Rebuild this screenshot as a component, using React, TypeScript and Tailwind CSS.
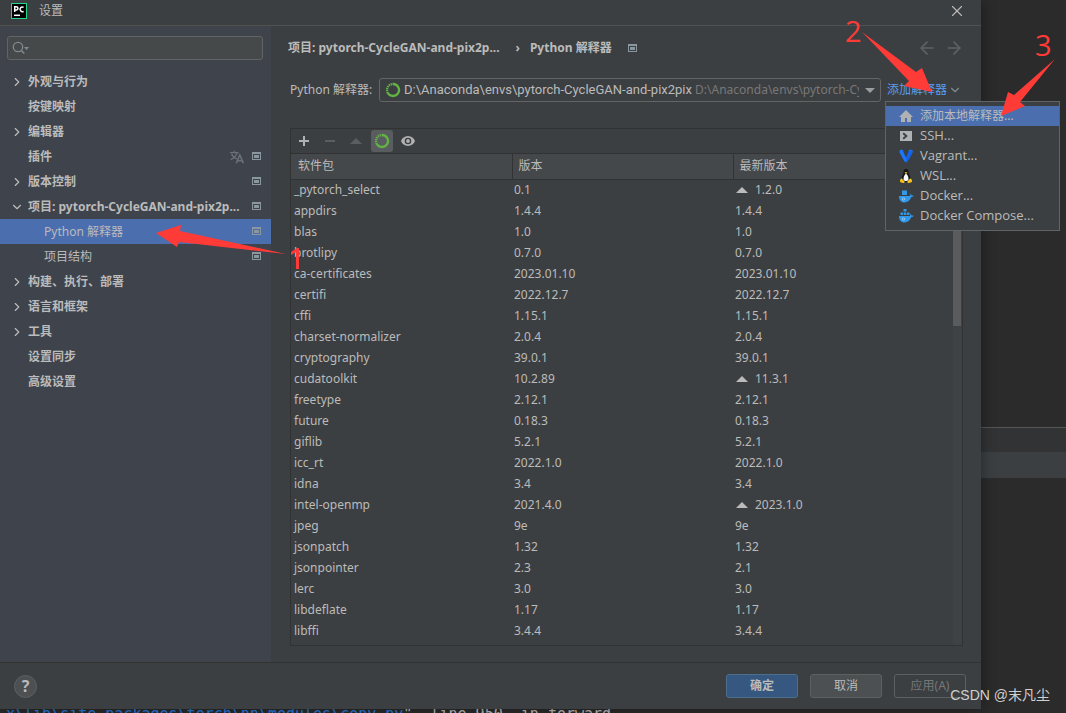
import React from 'react'
import clsx from 'clsx'
import { ArrowLeft, ArrowRight, ChevronDown, ChevronRight, X } from 'lucide-react'

const NAV = [
  { label: '外观与行为', arrow: 'right' },
  { label: '按键映射' },
  { label: '编辑器', arrow: 'right' },
  { label: '插件', translate: true, project: true },
  { label: '版本控制', arrow: 'right', project: true },
  { label: '项目: pytorch-CycleGAN-and-pix2p...', arrow: 'down', project: true },
  { label: 'Python 解释器', child: true, active: true, project: true },
  { label: '项目结构', child: true, project: true },
  { label: '构建、执行、部署', arrow: 'right' },
  { label: '语言和框架', arrow: 'right' },
  { label: '工具', arrow: 'right' },
  { label: '设置同步' },
  { label: '高级设置' },
]

const PACKAGES = [
  { name: '_pytorch_select', version: '0.1', latest: '1.2.0', upgrade: true },
  { name: 'appdirs', version: '1.4.4', latest: '1.4.4' },
  { name: 'blas', version: '1.0', latest: '1.0' },
  { name: 'brotlipy', version: '0.7.0', latest: '0.7.0' },
  { name: 'ca-certificates', version: '2023.01.10', latest: '2023.01.10' },
  { name: 'certifi', version: '2022.12.7', latest: '2022.12.7' },
  { name: 'cffi', version: '1.15.1', latest: '1.15.1' },
  { name: 'charset-normalizer', version: '2.0.4', latest: '2.0.4' },
  { name: 'cryptography', version: '39.0.1', latest: '39.0.1' },
  { name: 'cudatoolkit', version: '10.2.89', latest: '11.3.1', upgrade: true },
  { name: 'freetype', version: '2.12.1', latest: '2.12.1' },
  { name: 'future', version: '0.18.3', latest: '0.18.3' },
  { name: 'giflib', version: '5.2.1', latest: '5.2.1' },
  { name: 'icc_rt', version: '2022.1.0', latest: '2022.1.0' },
  { name: 'idna', version: '3.4', latest: '3.4' },
  { name: 'intel-openmp', version: '2021.4.0', latest: '2023.1.0', upgrade: true },
  { name: 'jpeg', version: '9e', latest: '9e' },
  { name: 'jsonpatch', version: '1.32', latest: '1.32' },
  { name: 'jsonpointer', version: '2.3', latest: '2.1' },
  { name: 'lerc', version: '3.0', latest: '3.0' },
  { name: 'libdeflate', version: '1.17', latest: '1.17' },
  { name: 'libffi', version: '3.4.4', latest: '3.4.4' },
]

const PyCharmLogo = () => (
  <svg className="size-4" viewBox="0 0 16 16">
    <rect x="0.5" y="0.5" width="15" height="15" fill="#000" stroke="#21d789" />
    <g fill="none" stroke="#fff" strokeWidth="1.5">
      <path d="M3.7 9V3.7h1.6a1.6 1.6 0 0 1 0 3.3H3.7" />
      <path d="M12.6 4.4a2.3 2.3 0 1 0 0 3.9" />
      <path d="M3 12.3h6" />
    </g>
  </svg>
)

const ProjectIcon = () => (
  <svg className="size-[9px] shrink-0" viewBox="0 0 9 9" shapeRendering="crispEdges">
    <path d="M0 0h9v8H0zM1 2v5h7V2z" fill="#8b979f" fillRule="evenodd" />
    <path d="M2 3h5v3H2z" fill="#8b979f" />
  </svg>
)

const TranslateIcon = () => (
  <svg className="size-3.5" viewBox="0 0 14 14" fill="none" stroke="#6b7079" strokeWidth="1.3">
    <path d="M0 2.6h8.5M4.3 0.8v1.8M1.6 4c.8 2.4 3 4 5.2 4.8M7 2.8C6.2 6 3.8 8.3 0.6 9.6" />
    <path d="M6.3 13.2L9.8 5l3.6 8.2M7.6 10.8h4.6" strokeWidth="1.6" />
  </svg>
)

const CondaIcon = () => (
  <svg className="size-4 shrink-0" viewBox="0 0 16 16" fill="none" stroke="#62b543">
    <path d="M8 2a6 6 0 1 1-5.2 9" strokeWidth="2.3" />
    <path d="M2.8 11A6 6 0 0 1 8 2" strokeWidth="2.3" strokeDasharray="1.3 0.7" />
  </svg>
)

const Triangle = ({ className }: { className: string }) => (
  <svg className={className} viewBox="0 0 12 6">
    <path d="M0 6L6 0l6 6z" fill="currentColor" />
  </svg>
)

const HomeIcon = () => (
  <svg className="size-4" viewBox="0 0 16 16" fill="#afb1b3">
    <path d="M8 2L1 9h2v5h4v-4h2v4h4V9h2z" />
  </svg>
)

const SshIcon = () => (
  <svg className="size-4" viewBox="0 0 16 16">
    <path d="M2 3h12v10H2z" fill="#afb1b3" />
    <path d="M5.2 5.2L8.4 8l-3.2 2.8" fill="none" stroke="#3c3f41" strokeWidth="1.8" />
  </svg>
)

const VagrantIcon = () => (
  <svg className="size-4" viewBox="0 0 16 16">
    <path d="M1.5 2.5l2.2-1 1.6 1v1.2L8 10l2.7-6.3V2.5l1.6-1 2.2 1v1.8L9.8 13 8 14.5 6.2 13 1.5 4.3z" fill="#1a78ff" />
    <path d="M10.7 3.5l3.8-1v1.8L9.8 13 8 14.5V10z" fill="#1263ea" />
  </svg>
)

const LinuxIcon = () => (
  <svg className="size-4" viewBox="0 0 16 16">
    <path d="M8 1c-2 0-2.6 1.4-2.5 3.4C5.5 6.3 3.5 8 3.3 11L5 14h6l1.8-3c-.2-3-2.3-4.7-2.3-6.6C10.6 2.4 10 1 8 1z" fill="#16181a" />
    <path d="M8 5.5C6.4 6.8 5.4 9 5.5 11.5c.8 2 4.2 2 5 0C10.6 9 9.6 6.8 8 5.5z" fill="#fff" />
    <path d="M6.5 4.6L8 4l1.5.6L8 6z" fill="#f5b91f" />
    <path d="M3.7 10.2l2.9 3.2c0 1.5-1.2 1.7-2.3 1.3L2 14.1c.2-1-.1-1.7.2-2.3zM12.3 10.2l-2.9 3.2c0 1.5 1.2 1.7 2.3 1.3l2.3-.6c-.2-1 .1-1.7-.2-2.3z" fill="#f8c21c" />
  </svg>
)

const DockerIcon = ({ compose }: { compose?: boolean }) => (
  <svg className="size-4" viewBox="0 0 16 16">
    <path d="M1 8h10.8c.6-.4.8-1.1.4-2.2 1 .4 1.3 1 1.4 1.7.8-.2 1.6 0 2.1.3-.5 1-1.4 1.3-2.4 1.3C12.2 12.7 9.7 14.5 6.5 14.5 3 14.5 1 12.3 1 8z" fill="#3298e8" />
    <circle cx="5.5" cy="11" r="1.2" fill="none" stroke="#9fd1f8" strokeWidth="0.8" />
    {compose ? (
      <path d="M5.5 1h3v2.5h-3zM2.5 4.5h2.5V7H2.5zM5.7 4.5h2.6V7H5.7zM9 4.5h2.5V7H9z" fill="#3298e8" />
    ) : (
      <path d="M4 2.5h5V7H4z" fill="#3298e8" />
    )}
  </svg>
)

const MENU = [
  { label: '添加本地解释器...', icon: <HomeIcon />, active: true },
  { label: 'SSH...', icon: <SshIcon /> },
  { label: 'Vagrant...', icon: <VagrantIcon /> },
  { label: 'WSL...', icon: <LinuxIcon /> },
  { label: 'Docker...', icon: <DockerIcon /> },
  { label: 'Docker Compose...', icon: <DockerIcon compose /> },
]

const Sidebar = () => (
  <nav className="w-[271px] shrink-0 bg-[#3e434c]">
    <div className="relative mt-2.5 mr-2 pl-[7px]">
      <input
        aria-label="搜索设置"
        className="block h-6 w-full rounded-[3px] border border-[#646464] bg-[#45494a] pl-7 outline-none"
      />
      <svg className="absolute top-1 left-3 h-4 w-5" viewBox="0 0 20 16" fill="none" stroke="#7f8b91">
        <circle cx="6" cy="7" r="4.7" strokeWidth="1.3" />
        <path d="M9.3 10.5l3 3" strokeWidth="1.6" />
        <path d="M12 7h5l-2.5 3z" fill="#7f8b91" stroke="none" />
      </svg>
    </div>
    <ul className="mt-[9px]">
      {NAV.map((item) => (
        <li key={item.label}>
          <a
            href="#"
            className={clsx(
              'flex h-[25px] items-center pr-2.5 whitespace-nowrap',
              item.child ? 'pl-11' : 'pl-2.5 font-bold',
              item.active && 'bg-[#4b6eaf]'
            )}
          >
            {!item.child && (
              <span className="w-[18px] shrink-0">
                {item.arrow === 'right' && <ChevronRight className="size-3.5" />}
                {item.arrow === 'down' && <ChevronDown className="size-3.5" />}
              </span>
            )}
            <span className="flex-1">{item.label}</span>
            <span className="flex items-center gap-2">
              {item.translate && <TranslateIcon />}
              {item.project && <ProjectIcon />}
            </span>
          </a>
        </li>
      ))}
    </ul>
  </nav>
)

const InterpreterMenu = () => (
  <div className="absolute top-full left-0 z-10 -mt-px w-[175px] border border-[#616365] bg-[#3c3f41] py-1">
    {MENU.map((item) => (
      <button
        key={item.label}
        className={clsx(
          'flex h-5 w-full items-center gap-1.5 pl-3 whitespace-nowrap',
          item.active ? 'bg-[#4b6eaf]' : "font-['Open_Sans',sans-serif] text-[13px]"
        )}
      >
        {item.icon}
        {item.label}
      </button>
    ))}
  </div>
)

const Toolbar = () => (
  <div className="flex h-6 items-center gap-1 px-0.5">
    <button aria-label="安装" className="grid size-[22px] place-items-center">
      <svg className="size-2.5" viewBox="0 0 10 10"><path d="M5 0v10M0 5h10" stroke="#afb1b3" strokeWidth="2" /></svg>
    </button>
    <button aria-label="卸载" className="grid size-[22px] place-items-center">
      <svg className="size-2.5" viewBox="0 0 10 10"><path d="M0 5h10" stroke="#5b5e60" strokeWidth="2" /></svg>
    </button>
    <button aria-label="升级" className="grid size-[22px] place-items-center">
      <Triangle className="h-1.5 w-3 text-[#5b5e60]" />
    </button>
    <button aria-label="使用 Conda 软件包管理器" className="grid size-[22px] place-items-center rounded-[3px] bg-[#595d5f]">
      <CondaIcon />
    </button>
    <button aria-label="显示早期发行版" className="grid size-[22px] place-items-center">
      <svg className="size-4" viewBox="0 0 16 16">
        <path d="M8 3C4.5 3 2 5.2 1 8c1 2.8 3.5 5 7 5s6-2.2 7-5c-1-2.8-3.5-5-7-5zm0 1.7a3.3 3.3 0 1 1 0 6.6 3.3 3.3 0 0 1 0-6.6z" fill="#afb1b3" fillRule="evenodd" />
        <circle cx="8" cy="8" r="1.9" fill="#afb1b3" />
      </svg>
    </button>
  </div>
)

const PackageTable = () => (
  <div className="flex flex-1 flex-col border border-[#323232]">
    <Toolbar />
    <div className="relative flex-1 border-t border-[#323232]">
      <table className="w-full table-fixed border-collapse text-left">
        <thead>
          <tr className="h-[25px] border-b border-[#323232] bg-[#45484a]">
            <th className="w-[221px] border-r border-[#323232] pl-[7px] font-normal">软件包</th>
            <th className="w-[221px] border-r border-[#323232] pl-1.5 font-normal">版本</th>
            <th className="pl-1.5 font-normal">最新版本</th>
          </tr>
        </thead>
        <tbody>
          {PACKAGES.map((pkg) => (
            <tr key={pkg.name} className="h-[21px] leading-4">
              <td className="pl-[3px]">{pkg.name}</td>
              <td className="pl-0.5">{pkg.version}</td>
              <td className="pl-0.5">
                <span className="flex items-center gap-1.5">
                  {pkg.upgrade && <Triangle className="mx-px h-1.5 w-3" />}
                  {pkg.latest}
                </span>
              </td>
            </tr>
          ))}
        </tbody>
      </table>
      <div className="absolute top-[26px] right-0 bottom-0 w-[9px] bg-[#3f4244]">
        <div className="h-[146px] w-2 bg-[#595b5d]" />
      </div>
    </div>
  </div>
)

const InterpreterPage = () => (
  <main className="flex min-w-0 flex-1 flex-col pr-[18px] pb-4 pl-[19px]">
    <div className="-ml-0.5 flex h-11 items-center">
      <h1 className="flex items-center font-bold whitespace-nowrap">
        <span>项目: pytorch-CycleGAN-and-pix2p...</span>
        <span className="mr-2.5 ml-4">›</span>
        <span>Python 解释器</span>
      </h1>
      <span className="ml-4 flex-1"><ProjectIcon /></span>
      <div className="-mr-px flex gap-[7px] text-[#5f6264]">
        <button aria-label="后退"><ArrowLeft className="size-5" /></button>
        <button aria-label="前进"><ArrowRight className="size-5" /></button>
      </div>
    </div>
    <div className="mt-2 flex h-6 items-center">
      <label htmlFor="interpreter" className="w-[89px] shrink-0 whitespace-nowrap">Python 解释器:</label>
      <button
        id="interpreter"
        className="flex h-6 min-w-0 flex-1 items-center rounded-[3px] border border-[#646464] px-[5px]"
      >
        <CondaIcon />
        <span className="ml-[3px] min-w-0 flex-1 overflow-hidden text-left whitespace-nowrap">
          <span className="font-['Roboto',sans-serif] text-[13px]">D:\Anaconda\envs\pytorch-CycleGAN-and-pix2pix</span>{' '}
          <span className="text-[#787878]">D:\Anaconda\envs\pytorch-CycleGAN-and-pix2pix</span>
        </span>
        <Triangle className="ml-1.5 h-[5px] w-2.5 shrink-0 rotate-180 text-[#9a9da0]" />
      </button>
      <div className="relative ml-1 flex h-6 w-[78px] items-center">
        <button className="flex items-center pl-0.5 whitespace-nowrap text-[#589df6]">
          添加解释器
          <ChevronDown className="ml-px size-3.5 text-[#7f8b91]" />
        </button>
        <InterpreterMenu />
      </div>
    </div>
    <div className="mt-[26px] flex flex-1 flex-col">
      <PackageTable />
    </div>
  </main>
)

const Footer = () => (
  <footer className="flex h-[47px] items-center gap-3 border-t border-[#323232] pr-[15px] pl-3.5">
    <button className="mr-auto grid size-[23px] place-items-center rounded-full border border-[#5e6060] bg-[#4c5052] text-base leading-none font-bold">
      ?
    </button>
    <button className="h-6 w-18 rounded-[3px] border border-[#4c708c] bg-[#365880] font-bold">确定</button>
    <button className="h-6 w-18 rounded-[3px] border border-[#5e6060] bg-[#4c5052]">取消</button>
    <button disabled className="h-6 w-18 rounded-[3px] border border-[#5e6060] text-[#777]">应用(A)</button>
  </footer>
)

// red step markers over the window
const Annotations = () => (
  <svg className="pointer-events-none absolute top-0 left-0 z-20 h-[713px] w-[1066px]" viewBox="0 0 1066 713" fill="#ff3b38">
    <path d="M156 233L181 225 180 231 286 254 179 242 177 247z" />
    <path d="M862 32L916 72 922 68 932 92 904 86 909 81z" />
    <path d="M1055 59L1020 102 1025 106 1001 116 1008 92 1014 95z" />
    <g fontFamily="Open Sans" fontSize="29">
      <text x="845" y="42">2</text>
      <text x="1035" y="56">3</text>
    </g>
    <path d="M291 252l6-4h2v21h-3v-17l-5 3z" />
  </svg>
)

const App = () => {
  return (
    <div className="relative flex min-h-screen flex-col overflow-hidden bg-[#2b2b2b] font-['Noto_Sans','Noto_Sans_CJK_SC',sans-serif] text-xs text-[#bbb]">
      <div className="flex flex-1">
        <div className="z-10 flex min-w-0 flex-1 flex-col bg-[#3c3f41] shadow-[0_0_14px_rgba(0,0,0,0.4)]">
          <header className="flex h-[26px] items-center border-b border-[#515151] pr-[15px] pb-[3px] pl-[11px]">
            <PyCharmLogo />
            <span className="ml-3 flex-1">设置</span>
            <button aria-label="关闭"><X className="size-[18px]" strokeWidth={1.5} /></button>
          </header>
          <div className="flex flex-1">
            <Sidebar />
            <InterpreterPage />
          </div>
          <Footer />
        </div>
        <aside className="w-[85px] shrink-0 pt-[427px]">
          <div className="h-[25px] border-t border-[#555] bg-[#313335]" />
          <div className="h-[26px] bg-[#3c3f41]" />
        </aside>
      </div>
      <pre className="h-1 overflow-hidden pl-1.5 font-['DejaVu_Sans_Mono',monospace] text-[15px] leading-[10px]">
        <span className="text-[#287bde]">x\lib\site-packages\torch\nn\modules\conv.py</span>", line 950, in forward
      </pre>
      <Annotations />
      <p className="absolute right-4 bottom-2 z-20 font-['Liberation_Sans','Noto_Sans_CJK_SC',sans-serif] text-sm text-[#d0d0d0]">
        CSDN @末凡尘
      </p>
    </div>
  )
}

export default App
